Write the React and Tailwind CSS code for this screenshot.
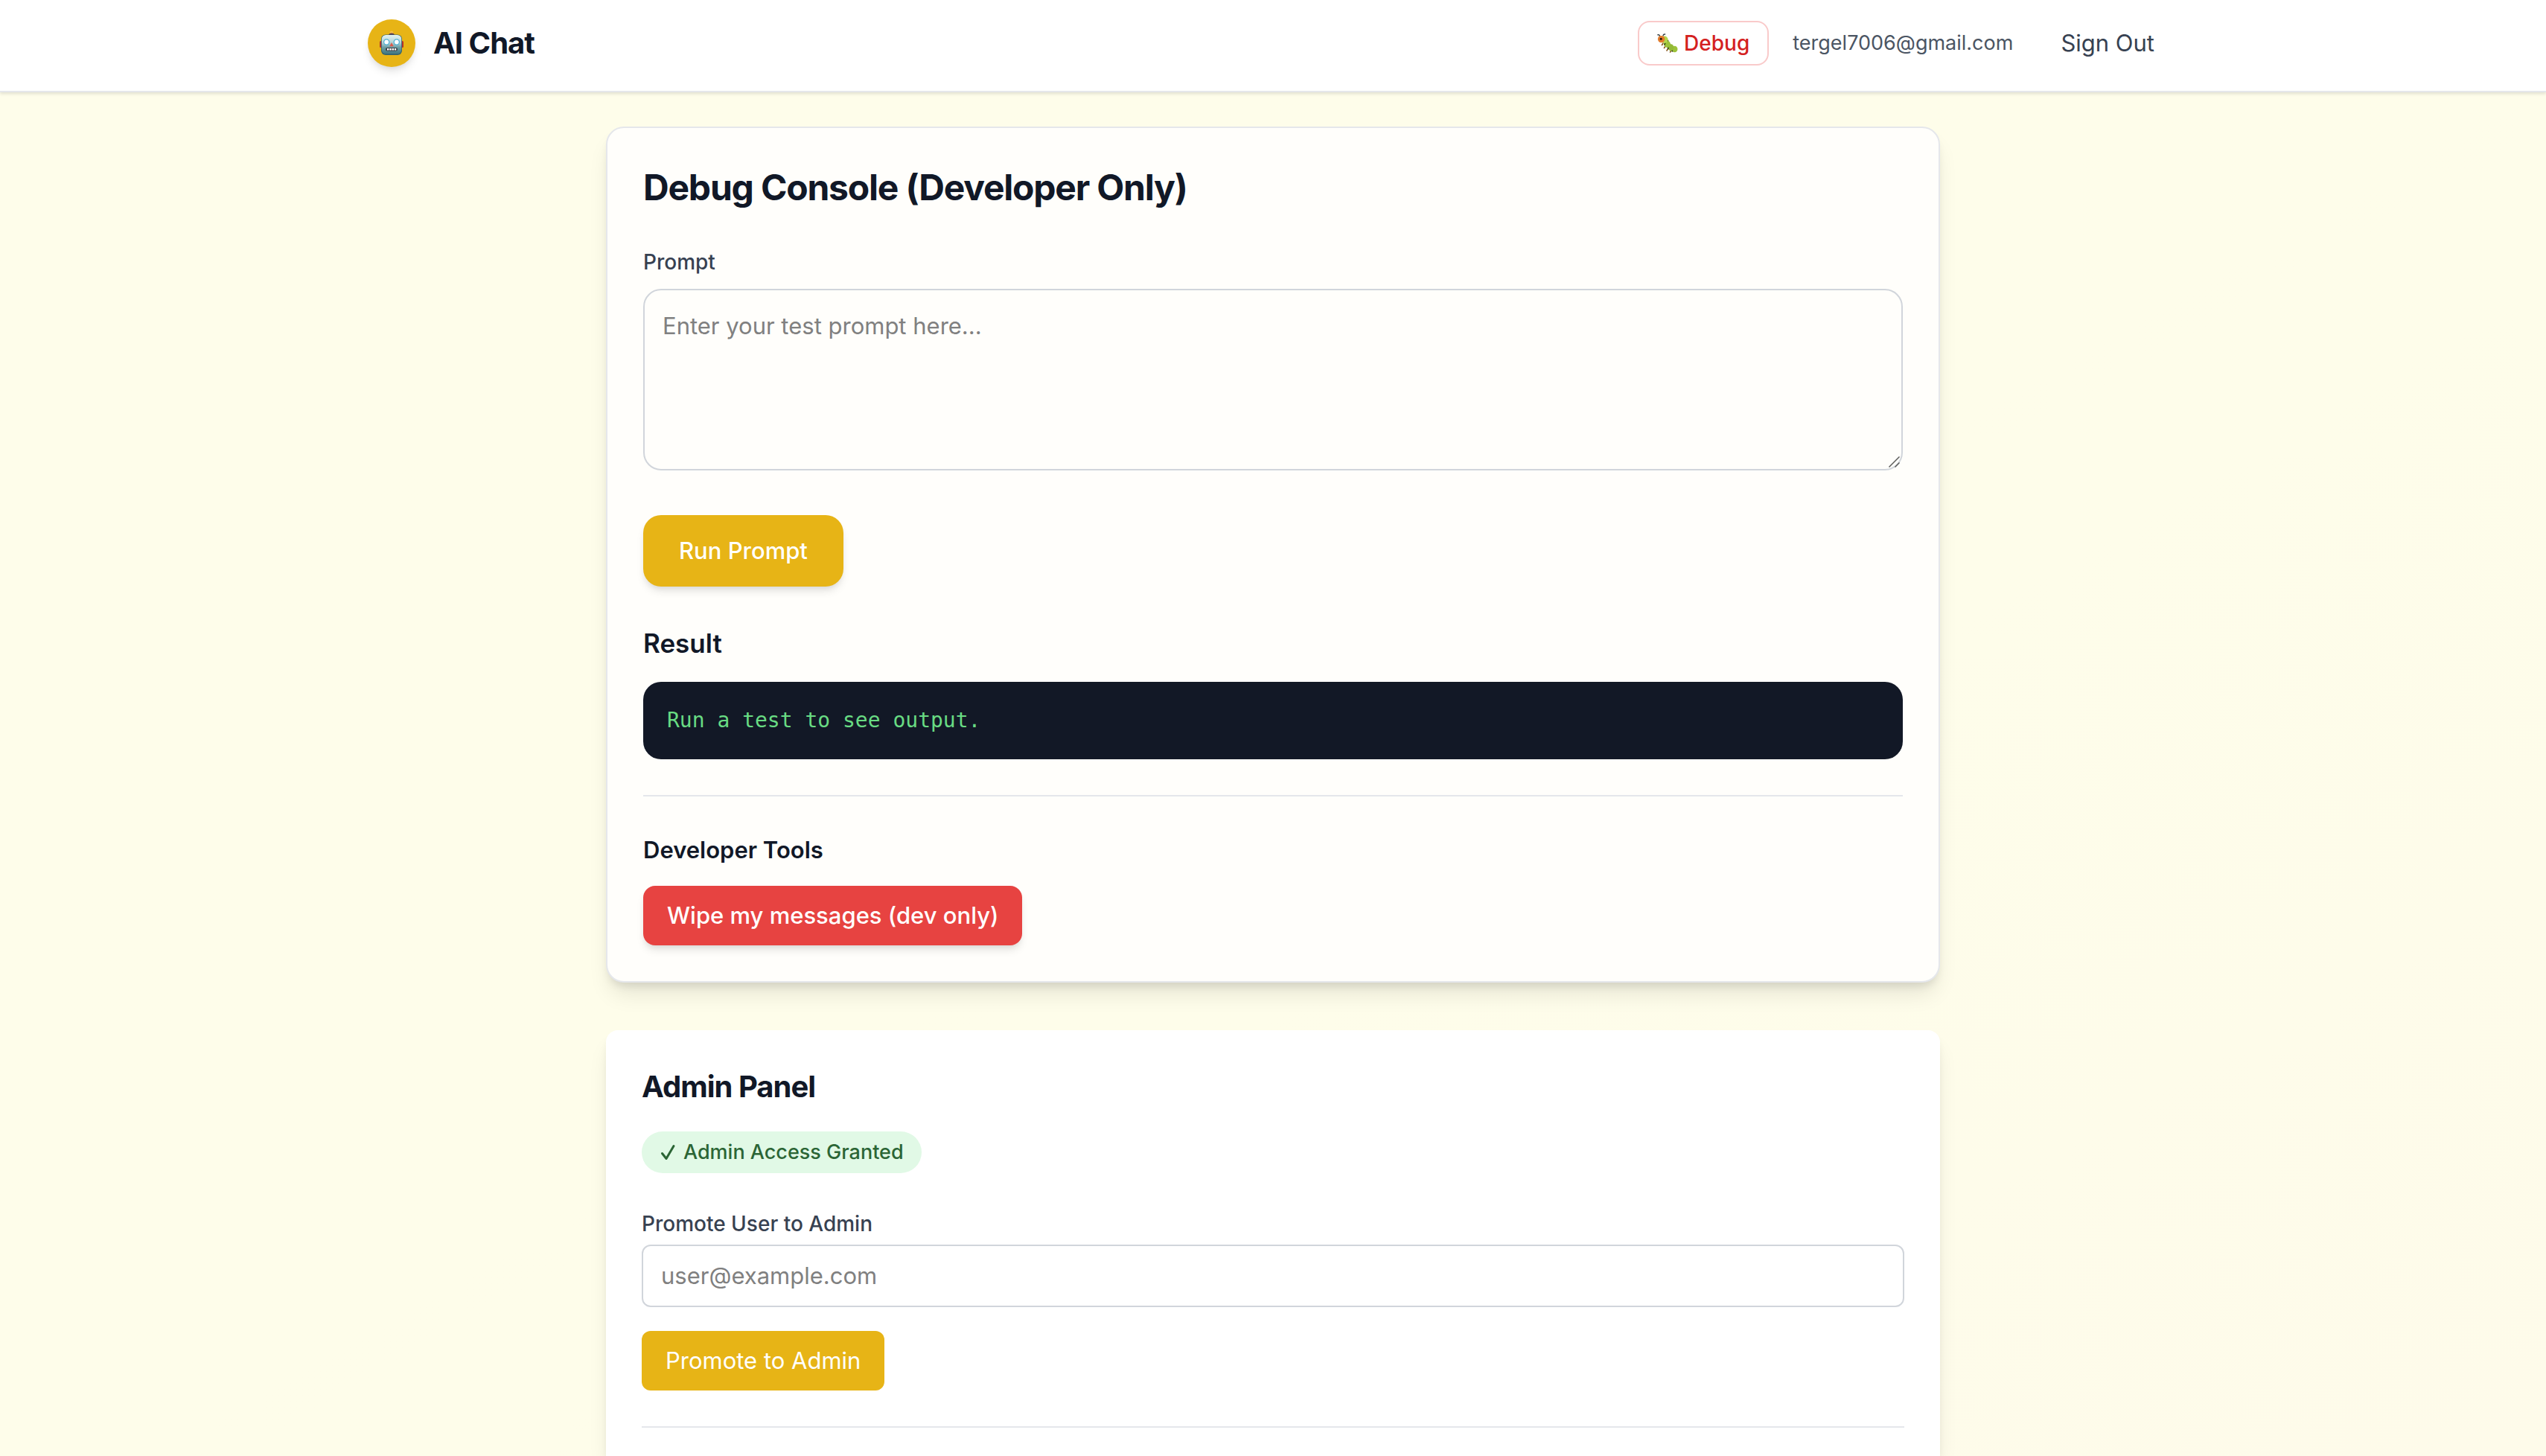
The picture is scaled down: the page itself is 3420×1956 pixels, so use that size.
function RobotIcon() {
  return (
    <svg viewBox="0 0 32 34" className="h-[34px] w-8" aria-label="Robot" role="img">
      <defs>
        <linearGradient id="robotFace" x1="0" y1="0" x2="0" y2="1">
          <stop offset="0" stopColor="#e3f3f3" />
          <stop offset="0.4" stopColor="#b4d2d4" />
          <stop offset="0.65" stopColor="#6c9ea5" />
          <stop offset="1" stopColor="#3f7680" />
        </linearGradient>
      </defs>
      <circle cx="16" cy="2.6" r="2.2" fill="#f6bd45" />
      <path d="M12 6.8c0-2 1.600-3.200 4-3.200s4 1.200 4 3.200z" fill="#5b3a55" />
      <rect x="0" y="14" width="4" height="9" rx="1.500" fill="#b3322b" />
      <rect x="28" y="14" width="4" height="9" rx="1.500" fill="#b3322b" />
      <rect x="2" y="5.500" width="28" height="27.500" rx="6" fill="#35636d" />
      <rect x="2.800" y="6" width="26.400" height="25.500" rx="5.500" fill="url(#robotFace)" />
      <circle cx="9.200" cy="15.500" r="4.200" fill="#4fb0d4" />
      <circle cx="22.800" cy="15.500" r="4.200" fill="#4fb0d4" />
      <circle cx="9.200" cy="15.500" r="2.900" fill="#fff" />
      <circle cx="22.800" cy="15.500" r="2.900" fill="#fff" />
      <path d="M16 16l2.700 5.200h-5.400z" fill="#e0584a" />
      <rect x="8" y="23" width="16" height="4.600" rx="2" fill="#3a3f45" />
      <path d="M10 24h2.400v2.600H10zM13.300 24h2.400v2.600h-2.400zM16.600 24H19v2.600h-2.400zM19.900 24h2.300v2.600h-2.300z" fill="#fff" />
    </svg>
  );
}

function BugIcon() {
  return (
    <svg viewBox="0 0 28 26" className="h-[26px] w-7" aria-label="Bug" role="img">
      <path d="M3.500 4C3.500 2 2.500 1.500 1 1.800M8 3c.2-1.600 1.200-2.200 2.600-2" stroke="#2f3a3f" strokeWidth="1.400" strokeLinecap="round" fill="none" />
      <path d="M8 13l-1.500 2.500M11 17l-1.500 2.500M14.500 20.500L13 23M19 23l-1.500 2" stroke="#8a5a22" strokeWidth="1.600" strokeLinecap="round" />
      <ellipse cx="23.500" cy="21" rx="4" ry="4.300" fill="#9cc23a" />
      <path d="M21.500 17.200c-1.800 2-2 5-.8 7.300" stroke="#2c3812" strokeWidth="1.500" fill="none" />
      <ellipse cx="18.500" cy="18.800" rx="3.800" ry="4.600" fill="#93b936" />
      <path d="M17.500 13.800c-2.400 1.600-3.400 4.600-2.600 7.400" stroke="#2c3812" strokeWidth="1.500" fill="none" />
      <ellipse cx="13.500" cy="14.300" rx="4.300" ry="4.600" fill="#9cc23a" />
      <path d="M15.200 9.200c-2.800.8-5 3.400-5.200 6.400" stroke="#2c3812" strokeWidth="1.500" fill="none" />
      <ellipse cx="10" cy="8.300" rx="4.600" ry="4.800" fill="#b3d64c" />
      <circle cx="5.600" cy="7.600" r="4.700" fill="#e27b2c" />
      <circle cx="5.200" cy="7.200" r="1.500" fill="#24150c" />
    </svg>
  );
}

function CheckIcon() {
  return (
    <svg viewBox="0 0 24 22" className="h-[22px] w-6" fill="none" stroke="currentColor" strokeWidth="3" strokeLinecap="round" strokeLinejoin="round" aria-hidden="true">
      <path d="M3.500 12.500l5.500 7L19 2.500" />
    </svg>
  );
}

function ResizeGrip() {
  return (
    <svg viewBox="0 0 16 16" className="pointer-events-none absolute right-1 bottom-1 size-4" stroke="#5c5c5a" strokeWidth="1.500" aria-hidden="true">
      <path d="M1.500 15.500l14-14M9.500 15.500l6-6" />
    </svg>
  );
}

export default function App() {
  return (
    <div className="flex min-h-screen flex-col bg-linear-to-br from-[#fefdea] from-60% to-[#fefbea] font-['Inter',sans-serif] text-[31px] leading-12 text-[#111827]">
      <header className="border-b-2 border-gray-200 bg-white shadow-[0_2px_4px_rgba(0,0,0,0.12)]">
        <div className="mx-auto flex max-w-[2560px] items-center justify-between px-16 pt-[18px] pb-6">
          <div className="flex items-center gap-6">
            <div className="flex size-16 items-center justify-center rounded-full bg-[#e7b416] shadow-[0_8px_12px_-2px_rgba(0,0,0,0.1),0_4px_8px_-4px_rgba(0,0,0,0.1)]">
              <RobotIcon />
            </div>
            <span className="text-[40px] leading-14 font-bold tracking-tight">AI Chat</span>
          </div>
          <div className="flex items-center gap-8">
            <button className="flex items-center gap-2 rounded-2xl border-2 border-[#f9caca] px-6 py-2 text-[28px] leading-10 font-medium text-[#d42020]">
              <BugIcon />
              Debug
            </button>
            <span className="text-[27px] leading-10 text-[#4b5563]">tergel7006@gmail.com</span>
            <button className="px-8 py-4 text-[#374151]">Sign Out</button>
          </div>
        </div>
      </header>

      <main className="mx-auto flex w-full max-w-[1792px] grow flex-col gap-16 pt-[46px]">
        <section className="rounded-3xl border-2 border-[#e5e7eb] bg-[#fffefb] p-12 shadow-[0_20px_30px_-6px_rgba(0,0,0,0.1),0_8px_12px_-4px_rgba(0,0,0,0.1)]">
          <h1 className="mb-12 text-[48px] leading-16 font-bold tracking-tight">Debug Console (Developer Only)</h1>
          <label htmlFor="prompt" className="mb-4 block text-[28px] leading-10 font-medium text-[#374151]">
            Prompt
          </label>
          <div className="relative">
            <textarea
              id="prompt"
              rows={4}
              placeholder="Enter your test prompt here..."
              className="block w-full resize-none rounded-3xl border-2 border-[#d1d5db] bg-transparent p-6 placeholder:text-[#808080]"
            />
            <ResizeGrip />
          </div>
          <button className="mt-15 block rounded-3xl bg-[#e7b416] px-12 py-6 font-medium text-white shadow-[0_8px_12px_-2px_rgba(0,0,0,0.1),0_4px_8px_-4px_rgba(0,0,0,0.1)]">
            Run Prompt
          </button>
          <h2 className="mt-12 mb-6 text-[35px] leading-14 font-semibold">Result</h2>
          <pre className="rounded-3xl bg-[#121826] p-8 font-['DejaVu_Sans_Mono',monospace] text-[28px] leading-10 text-[#68db83]">
            Run a test to see output.
          </pre>
          <hr className="my-12 border-t-2 border-[#e5e7eb]" />
          <h3 className="mb-6 font-semibold">Developer Tools</h3>
          <button className="block rounded-2xl bg-[#e74341] px-8 py-4 font-medium text-white shadow-[0_8px_12px_-2px_rgba(0,0,0,0.1),0_4px_8px_-4px_rgba(0,0,0,0.1)]">
            Wipe my messages (dev only)
          </button>
        </section>

        <section className="grow rounded-t-2xl bg-white px-12 pt-12 shadow-[0_20px_30px_-6px_rgba(0,0,0,0.1),0_8px_12px_-4px_rgba(0,0,0,0.1)]">
          <h2 className="mb-8 text-[40px] leading-14 font-bold tracking-tight">Admin Panel</h2>
          <div className="mb-12 flex w-fit items-center gap-2 rounded-full bg-[#e1f9e6] px-6 py-2 text-[27px] leading-10 font-medium text-[#2b6535]">
            <CheckIcon />
            Admin Access Granted
          </div>
          <label htmlFor="email" className="mb-2 block text-[28px] leading-10 font-medium text-[#374151]">
            Promote User to Admin
          </label>
          <input
            id="email"
            type="email"
            placeholder="user@example.com"
            className="block w-full rounded-xl border-2 border-[#d1d5db] px-6 py-4 placeholder:text-[#808080]"
          />
          <button className="mt-8 block rounded-xl bg-[#e7b416] px-8 py-4 text-white">Promote to Admin</button>
          <hr className="mt-12 border-t-2 border-[#e5e7eb]" />
        </section>
      </main>
    </div>
  );
}
